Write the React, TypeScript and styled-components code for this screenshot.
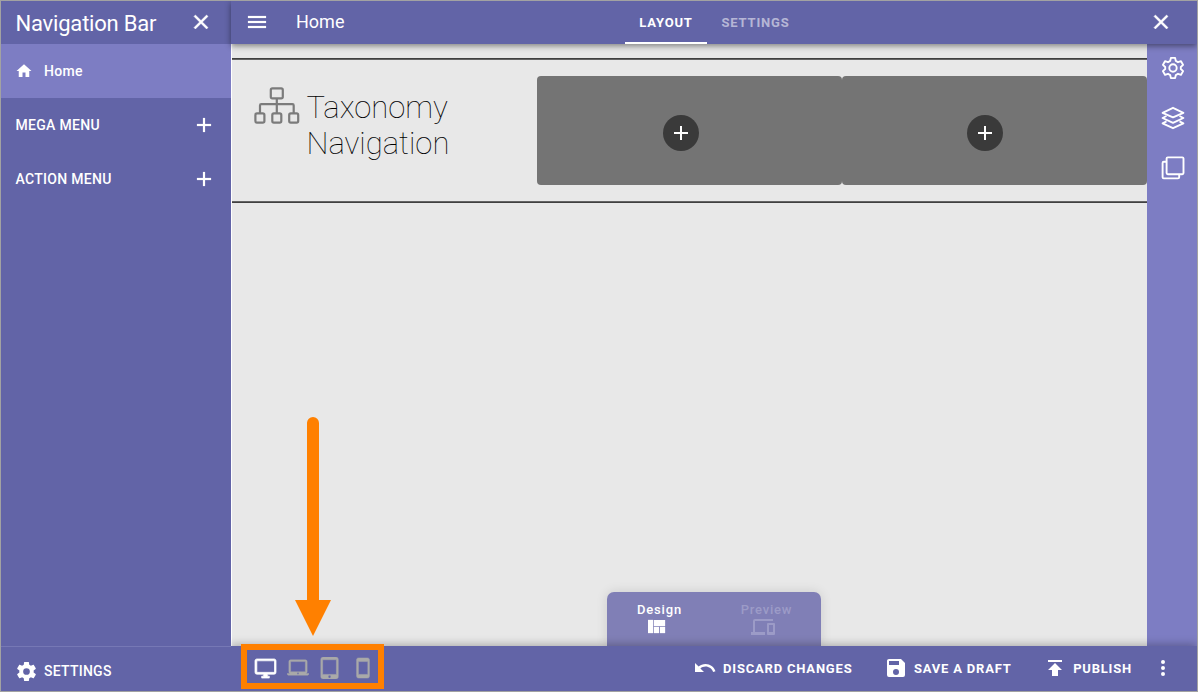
import React from 'react';
import styled, { createGlobalStyle } from 'styled-components';

const GlobalStyle = createGlobalStyle`
  *, *::before, *::after { box-sizing: border-box; }
  body { margin: 0; font-family: Roboto, "Liberation Sans", sans-serif; color: #fff; }
  button { font: inherit; letter-spacing: inherit; color: inherit; background: none; border: 0; padding: 0; }
`;

const BAR = '#6264a7';
const LIGHT = '#7d7dc3';

const icons = {
  close: 'M19,6.41L17.59,5L12,10.59L6.41,5L5,6.41L10.59,12L5,17.59L6.41,19L12,13.41L17.59,19L19,17.59L13.41,12L19,6.41Z',
  plus: 'M19,13H13V19H11V13H5V11H11V5H13V11H19V13Z',
  menu: 'M3,6H21V8H3V6M3,11H21V13H3V11M3,16H21V18H3V16Z',
  home: 'M10,20V14H14V20H19V12H22L12,3L2,12H5V20H10Z',
  cog: 'M12,15.5A3.5,3.5 0 0,1 8.5,12A3.5,3.5 0 0,1 12,8.5A3.5,3.5 0 0,1 15.5,12A3.5,3.5 0 0,1 12,15.5M19.43,12.97C19.47,12.65 19.5,12.33 19.5,12C19.5,11.67 19.47,11.34 19.43,11L21.54,9.37C21.73,9.22 21.78,8.95 21.66,8.73L19.66,5.27C19.54,5.05 19.27,4.96 19.05,5.05L16.56,6.05C16.04,5.66 15.5,5.32 14.87,5.07L14.5,2.42C14.46,2.18 14.25,2 14,2H10C9.75,2 9.54,2.18 9.5,2.42L9.13,5.07C8.5,5.32 7.96,5.66 7.44,6.05L4.95,5.05C4.73,4.96 4.46,5.05 4.34,5.27L2.34,8.73C2.21,8.95 2.27,9.22 2.46,9.37L4.57,11C4.53,11.34 4.5,11.67 4.5,12C4.5,12.33 4.53,12.65 4.57,12.97L2.46,14.63C2.27,14.78 2.21,15.05 2.34,15.27L4.34,18.73C4.46,18.95 4.73,19.03 4.95,18.95L7.44,17.94C7.96,18.34 8.5,18.68 9.13,18.93L9.5,21.58C9.54,21.82 9.75,22 10,22H14C14.25,22 14.46,21.82 14.5,21.58L14.87,18.93C15.5,18.67 16.04,18.34 16.56,17.94L19.05,18.95C19.27,19.03 19.54,18.95 19.66,18.73L21.66,15.27C21.78,15.05 21.73,14.78 21.54,14.63L19.43,12.97Z',
  monitor: 'M21,16H3V4H21M21,2H3C1.89,2 1,2.89 1,4V16A2,2 0 0,0 3,18H10V20H8V22H16V20H14V18H21A2,2 0 0,0 23,16V4C23,2.89 22.1,2 21,2Z',
  laptop: 'M20 18c1.1 0 1.99-.9 1.99-2L22 5c0-1.1-.9-2-2-2H4c-1.1 0-2 .9-2 2v11c0 1.1.9 2 2 2H0c0 1.1.9 2 2 2h20c1.1 0 2-.9 2-2h-4zM4 5h16v11H4V5zm8 14c-.55 0-1-.45-1-1s.45-1 1-1 1 .45 1 1-.45 1-1 1z',
  tablet: 'M18.5 0h-14C3.12 0 2 1.12 2 2.5v19C2 22.88 3.12 24 4.5 24h14c1.38 0 2.5-1.12 2.5-2.5v-19C21 1.12 19.88 0 18.5 0zm-7 23c-.83 0-1.5-.67-1.5-1.5s.67-1.5 1.5-1.5 1.5.67 1.5 1.5-.67 1.5-1.5 1.5zm7.5-4H4V3h15v16z',
  phone: 'M17,19H7V5H17M17,1H7C5.89,1 5,1.89 5,3V21A2,2 0 0,0 7,23H17A2,2 0 0,0 19,21V3C19,1.89 18.1,1 17,1Z',
  quilt: 'M10,5V11H21V5M16,18H21V12H16M4,18H9V5H4M10,18H15V12H10V18Z',
  devices: 'M4,6H22V4H4A2,2 0 0,0 2,6V17H0V20H14V17H4V6M23,8H17A1,1 0 0,0 16,9V19A1,1 0 0,0 17,20H23A1,1 0 0,0 24,19V9A1,1 0 0,0 23,8M22,17H18V10H22V17Z',
  undo: 'M12.5,8C9.85,8 7.45,9 5.6,10.6L2,7V16H11L7.38,12.38C8.77,11.22 10.54,10.5 12.5,10.5C16.04,10.5 19.05,12.81 20.1,16L22.47,15.22C21.08,11.03 17.15,8 12.5,8Z',
  save: 'M15,9H5V5H15M12,19A3,3 0 0,1 9,16A3,3 0 0,1 12,13A3,3 0 0,1 15,16A3,3 0 0,1 12,19M17,3H5C3.89,3 3,3.9 3,5V19A2,2 0 0,0 5,21H19A2,2 0 0,0 21,19V7L17,3Z',
  publish: 'M5,4V6H19V4H5M5,14H9V20H15V14H19L12,7L5,14Z',
  dots: 'M12,16A2,2 0 0,1 14,18A2,2 0 0,1 12,20A2,2 0 0,1 10,18A2,2 0 0,1 12,16M12,10A2,2 0 0,1 14,12A2,2 0 0,1 12,14A2,2 0 0,1 10,12A2,2 0 0,1 12,10M12,4A2,2 0 0,1 14,6A2,2 0 0,1 12,8A2,2 0 0,1 10,6A2,2 0 0,1 12,4Z',
};

const IconSvg = styled.svg<{ $weight: number }>`
  display: block;
  flex: none;
  fill: currentColor;
  stroke: currentColor;
  stroke-width: ${(p) => p.$weight};
`;

function Icon({ name, size = 24, weight = 0 }: { name: keyof typeof icons; size?: number; weight?: number }) {
  return (
    <IconSvg width={size} height={size} viewBox="0 0 24 24" $weight={weight}>
      <path d={icons[name]} />
    </IconSvg>
  );
}

const Frame = styled.div`
  display: flex;
  width: 1198px;
  height: 692px;
  border: 1px solid #a2a2a2;
  background: #e8e8e8;
  overflow: hidden;
`;

const Sidebar = styled.aside`
  width: 230px;
  flex: none;
  display: flex;
  flex-direction: column;
  background: ${BAR};
`;

const SidebarHeader = styled.header`
  height: 43px;
  display: flex;
  align-items: center;
  justify-content: space-between;
  padding: 0 18px 1px 14.5px;
`;

const SidebarTitle = styled.h1`
  margin: 3px 0 0;
  font-size: 22px;
  line-height: 26px;
  font-weight: 400;
  letter-spacing: -0.2px;
  white-space: nowrap;
`;

const NavItem = styled.a<{ $active?: boolean }>`
  height: 54px;
  display: flex;
  align-items: center;
  justify-content: space-between;
  padding: 0 15px 0 13.5px;
  font-size: 14px;
  font-weight: 500;
  letter-spacing: 0.3px;
  background: ${(p) => (p.$active ? LIGHT : 'transparent')};
`;

const NavLabel = styled.span<{ $indent?: boolean }>`
  display: flex;
  align-items: center;
  gap: 11.5px;
  margin-left: ${(p) => (p.$indent ? '1px' : '0')};
  white-space: nowrap;
`;

const SidebarFooter = styled.footer`
  margin-top: auto;
  height: 45px;
  display: flex;
  align-items: center;
  gap: 6px;
  padding: 4px 0 0 14px;
  border-top: 1px solid #7678b5;
  font-size: 14px;
  font-weight: 500;
  letter-spacing: 0.25px;
`;

const Editor = styled.main`
  flex: 1;
  min-width: 0;
  display: flex;
  flex-direction: column;
`;

const TopBar = styled.header`
  position: relative;
  z-index: 2;
  height: 43px;
  flex: none;
  display: flex;
  align-items: center;
  padding: 0 24px 1px 14px;
  background: ${BAR};
  box-shadow: 0 2px 6px rgba(0, 0, 0, 0.45);
`;

const PageName = styled.span`
  width: 353px;
  flex: none;
  padding-left: 27px;
  font-size: 18px;
  line-height: 22px;
`;

const Tabs = styled.nav`
  display: flex;
  align-self: stretch;
  margin: 0 0 -1px 3px;
`;

const Tab = styled.button<{ $active?: boolean }>`
  width: ${(p) => (p.$active ? '82px' : '97px')};
  padding-top: 2px;
  font-size: 13px;
  font-weight: 700;
  letter-spacing: 0.8px;
  border-bottom: 2px solid ${(p) => (p.$active ? '#fff' : 'transparent')};
  color: ${(p) => (p.$active ? '#fff' : 'rgba(255, 255, 255, 0.55)')};
`;

const CloseEditor = styled.button`
  margin-left: auto;
`;

const Workspace = styled.div`
  flex: 1;
  min-height: 0;
  display: flex;
  border-left: 1px solid #fff;
`;

const Canvas = styled.section`
  flex: 1;
  display: flex;
  flex-direction: column;
  justify-content: space-between;
  padding-top: 14px;
`;

const NavPreview = styled.div`
  height: 145px;
  display: flex;
  padding: 17px 0;
  border-top: 1px solid #404040;
  border-bottom: 1px solid #404040;
  box-shadow: inset 0 1px #646464, inset 0 -1px #646464;
`;

const Brand = styled.div`
  width: 305px;
  flex: none;
  display: flex;
  align-items: flex-start;
  padding: 11px 0 0 22px;
`;

const BrandName = styled.div`
  width: 160px;
  margin: 3px 0 0 6.5px;
  color: #000;
  font-size: 31px;
  line-height: 36px;
  font-weight: 100;
`;

const DropZone = styled.div`
  width: 305px;
  flex: none;
  display: flex;
  align-items: center;
  justify-content: center;
  padding: 4px 17px 0 0;
  border-radius: 4px;
  background: #747474;
  &:last-child { padding-right: 19px; }
`;

const AddButton = styled.button`
  width: 36px;
  height: 36px;
  display: grid;
  place-items: center;
  border-radius: 50%;
  background: #3a3a3a;
`;

const ModeSwitch = styled.div`
  align-self: center;
  width: 214px;
  height: 54px;
  margin-left: 49px;
  display: flex;
  border-radius: 7px 7px 0 0;
  background: #807fb6;
  box-shadow: 0 0 12px rgba(0, 0, 0, 0.12);
`;

const Mode = styled.button<{ $muted?: boolean }>`
  width: 107px;
  display: flex;
  flex-direction: column;
  align-items: center;
  padding: 9px 2px 0 0;
  font-size: 13px;
  line-height: 17px;
  font-weight: 500;
  letter-spacing: 0.8px;
  color: ${(p) => (p.$muted ? '#9c9bc7' : '#fff')};

  ${IconSvg} {
    margin: -3px 8px 0 0;
  }
`;

const ToolRail = styled.aside`
  width: 50px;
  display: flex;
  flex-direction: column;
  align-items: center;
  gap: 26px;
  padding: 12px 0 0 2px;
  background: ${LIGHT};
`;

const LineIcon = styled.svg`
  display: block;
  flex: none;
  fill: none;
  stroke: currentColor;
  stroke-width: 1.9;
  stroke-linejoin: round;
`;

const BottomBar = styled.footer`
  position: relative;
  z-index: 2;
  height: 45px;
  flex: none;
  display: flex;
  align-items: center;
  justify-content: space-between;
  padding: 0 22px 1px 10px;
  background: ${BAR};
  box-shadow: 0 -2px 8px rgba(0, 0, 0, 0.25);
  clip-path: inset(-20px 0 0 0);
`;

const Devices = styled.div`
  width: 143px;
  height: 45px;
  margin-top: -3px;
  display: flex;
  align-items: center;
  padding: 3px 0 0 7px;
  border: 6px solid #ff8000;
`;

const Device = styled.button<{ $active?: boolean }>`
  width: 32.5px;
  flex: none;
  display: grid;
  justify-items: center;
  margin-left: ${(p) => (p.$active ? '-5px' : '0')};
  color: ${(p) => (p.$active ? '#fff' : '#a9a9a9')};
`;

const Actions = styled.div`
  display: flex;
  align-items: center;
  font-size: 13px;
  font-weight: 700;
  letter-spacing: 0.8px;
`;

const Action = styled.button<{ $after: number }>`
  display: flex;
  align-items: center;
  gap: 6px;
  margin-right: ${(p) => p.$after}px;
  white-space: nowrap;
`;

const Pointer = styled.svg`
  position: absolute;
  left: 295px;
  top: 417px;
  z-index: 5;
`;

function Sitemap() {
  return (
    <svg width="46" height="38" viewBox="0 0 46 38" fill="none" stroke="#7b7b7b" strokeWidth="2.2">
      <rect x="16.8" y="1.4" width="12" height="10" rx="1.6" />
      <rect x="1.4" y="26.3" width="9" height="9.4" rx="1.6" />
      <rect x="18.3" y="26.3" width="9" height="9.4" rx="1.6" />
      <rect x="35.2" y="26.3" width="9" height="9.4" rx="1.6" />
      <path d="M22.8 11.4V26M6 26V18.5Q6 17.2 7.3 17.2H38.4Q39.7 17.2 39.7 18.5V26" />
    </svg>
  );
}

export default function App() {
  return (
    <>
      <GlobalStyle />
      <Frame>
        <Sidebar>
          <SidebarHeader>
            <SidebarTitle>Navigation Bar</SidebarTitle>
            <Icon name="close" weight={0.5} />
          </SidebarHeader>
          <NavItem $active>
            <NavLabel><Icon name="home" size={18} />Home</NavLabel>
          </NavItem>
          <NavItem>
            <NavLabel $indent>MEGA MENU</NavLabel>
            <Icon name="plus" weight={0.2} />
          </NavItem>
          <NavItem>
            <NavLabel $indent>ACTION MENU</NavLabel>
            <Icon name="plus" weight={0.2} />
          </NavItem>
          <SidebarFooter>
            <Icon name="cog" size={23} />
            SETTINGS
          </SidebarFooter>
        </Sidebar>

        <Editor>
          <TopBar>
            <Icon name="menu" weight={0.2} />
            <PageName>Home</PageName>
            <Tabs>
              <Tab $active>LAYOUT</Tab>
              <Tab>SETTINGS</Tab>
            </Tabs>
            <CloseEditor><Icon name="close" weight={0.5} /></CloseEditor>
          </TopBar>

          <Workspace>
            <Canvas>
              <NavPreview>
                <Brand>
                  <Sitemap />
                  <BrandName>Taxonomy Navigation</BrandName>
                </Brand>
                <DropZone><AddButton><Icon name="plus" /></AddButton></DropZone>
                <DropZone><AddButton><Icon name="plus" /></AddButton></DropZone>
              </NavPreview>
              <ModeSwitch>
                <Mode>Design<Icon name="quilt" weight={0.3} /></Mode>
                <Mode $muted>Preview<Icon name="devices" /></Mode>
              </ModeSwitch>
            </Canvas>
            <ToolRail>
              <LineIcon width="24" height="24" viewBox="0 0 24 24">
                <path d="M9.9 1.9h4.2l.7 3 2.2 1.3 3-1 2.1 3.7-2.3 2.1v2l2.3 2.1-2.1 3.7-3-1-2.2 1.3-.7 3H9.9l-.7-3L7 17.8l-3 1-2.1-3.7L4.2 13v-2L1.9 8.9 4 5.2l3 1 2.2-1.3z" />
                <circle cx="12" cy="12" r="3.7" />
              </LineIcon>
              <LineIcon width="24" height="24" viewBox="0 0 24 24">
                <path d="M12 1.8L22.4 6.8 12 11.4 1.6 6.8z" />
                <path d="M5.5 10L1.6 12 12 16.8 22.4 12 18.5 10M5.5 15.4L1.6 17.4 12 22.2 22.4 17.4 18.5 15.4" />
              </LineIcon>
              <LineIcon width="24" height="24" viewBox="0 0 24 24">
                <rect x="5.6" y="1.4" width="16.9" height="16.9" rx="1.2" />
                <path d="M5.6 5.8H2.8Q1.6 5.8 1.6 7V21.2Q1.6 22.4 2.8 22.4H17Q18.2 22.4 18.2 21.2V18.3" />
              </LineIcon>
            </ToolRail>
          </Workspace>

          <BottomBar>
            <Devices>
              <Device $active><Icon name="monitor" size={23} weight={0.7} /></Device>
              <Device><Icon name="laptop" size={22} weight={0.4} /></Device>
              <Device><Icon name="tablet" size={22} weight={0.5} /></Device>
              <Device><Icon name="phone" size={22} weight={0.5} /></Device>
            </Devices>
            <Actions>
              <Action $after={31.5}><Icon name="undo" />DISCARD CHANGES</Action>
              <Action $after={31.5}><Icon name="save" />SAVE A DRAFT</Action>
              <Action $after={19}><Icon name="publish" />PUBLISH</Action>
              <Icon name="dots" />
            </Actions>
          </BottomBar>
        </Editor>
      </Frame>
      <Pointer width="36" height="219" viewBox="0 0 36 219" fill="#ff8000">
        <path d="M12 6A6 6 0 0 1 24 6V183H36L18 219L0 183H12Z" />
      </Pointer>
    </>
  );
}
